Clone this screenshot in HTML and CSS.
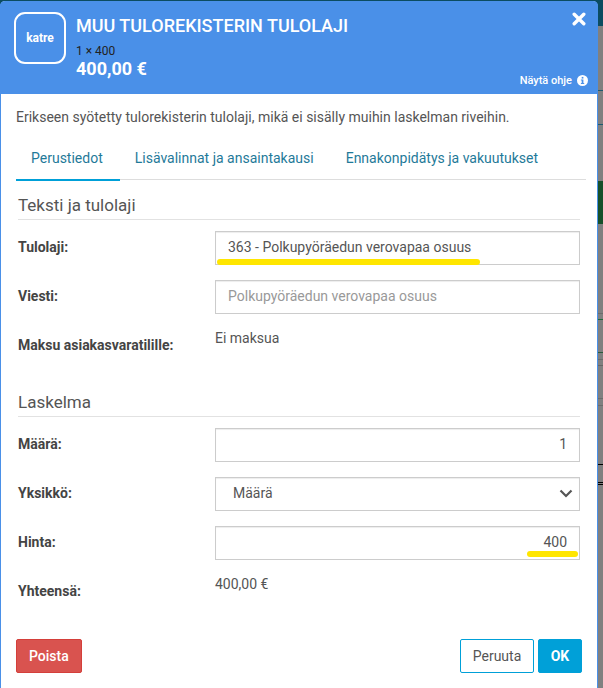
FILE: index.html
```html
<!DOCTYPE html>
<html lang="en">
<head>
    <meta charset="UTF-8">
    <meta name="viewport" content="width=device-width, initial-scale=1.0">
    <title>Muu tulorekisterin tulolaji</title>
    <link rel="stylesheet" href="styles.css">
</head>
<body>
    <div class="modal">
        <header class="modal-header">
            <div class="avatar">katre</div>
            <div class="header-text">
                <h1>MUU TULOREKISTERIN TULOLAJI</h1>
                <div class="header-count">1 × 400</div>
                <div class="header-sum">400,00 €</div>
            </div>
            <div class="header-side">
                <svg class="close-icon" width="14" height="14" viewBox="0 0 14 14">
                    <path d="M2.2 2.2l9.6 9.6M11.8 2.2l-9.6 9.6" stroke="#fff" stroke-width="3.4" stroke-linecap="round"/>
                </svg>
                <a href="#" class="help-link">Näytä ohje
                    <svg width="11" height="11" viewBox="0 0 11 11">
                        <circle cx="5.5" cy="5.5" r="5.5" fill="#fff"/>
                        <rect x="4.7" y="1.9" width="1.7" height="1.7" fill="#4a90e8"/>
                        <path d="M3.9 4.5h2.5v3.4h.8v1H3.9v-1h.8V5.500h-.8z" fill="#4a90e8"/>
                    </svg>
                </a>
            </div>
        </header>

        <div class="modal-body">
            <p class="intro">Erikseen syötetty tulorekisterin tulolaji, mikä ei sisälly muihin laskelman riveihin.</p>

            <nav class="tabs">
                <a href="#" class="tab active">Perustiedot</a>
                <a href="#" class="tab">Lisävalinnat ja ansaintakausi</a>
                <a href="#" class="tab">Ennakonpidätys ja vakuutukset</a>
            </nav>

            <h2 class="section-title">Teksti ja tulolaji</h2>
            <div class="form-row">
                <label>Tulolaji:</label>
                <div class="field">
                    363 - Polkupyöräedun verovapaa osuus
                    <span class="marker marker-long"></span>
                </div>
            </div>
            <div class="form-row">
                <label>Viesti:</label>
                <div class="field placeholder">Polkupyöräedun verovapaa osuus</div>
            </div>
            <div class="form-row static">
                <label>Maksu asiakasvaratilille:</label>
                <div class="value">Ei maksua</div>
            </div>

            <h2 class="section-title second">Laskelma</h2>
            <div class="form-row">
                <label>Määrä:</label>
                <div class="field number">1</div>
            </div>
            <div class="form-row">
                <label>Yksikkö:</label>
                <div class="field select">
                    Määrä
                    <svg width="14" height="9" viewBox="0 0 14 9">
                        <path d="M1.500 1.500L7 7l5.500-5.500" fill="none" stroke="#555" stroke-width="2.200"/>
                    </svg>
                </div>
            </div>
            <div class="form-row">
                <label>Hinta:</label>
                <div class="field number">
                    400
                    <span class="marker marker-short"></span>
                </div>
            </div>
            <div class="form-row static">
                <label>Yhteensä:</label>
                <div class="value">400,00 €</div>
            </div>

            <footer class="actions">
                <button class="btn btn-danger">Poista</button>
                <div class="actions-right">
                    <button class="btn btn-outline">Peruuta</button>
                    <button class="btn btn-primary">OK</button>
                </div>
            </footer>
        </div>
    </div>

    <!-- page behind the dialog, only a thin slice shows -->
    <svg class="backdrop" width="5" height="688" viewBox="0 0 5 688">
        <rect y="91" width="5" height="1" fill="#1d5a70"/>
        <rect y="125" width="5" height="1" fill="#1d5a70"/>
        <rect y="182" width="5" height="43" fill="#16502a"/>
        <rect y="314" width="5" height="1" fill="#6c6c6c"/>
        <rect y="320" width="5" height="1" fill="#1f6a3a"/>
        <rect y="353" width="5" height="1" fill="#2c5a3c"/>
        <rect y="360" width="5" height="1" fill="#6c6c6c"/>
        <rect y="366" width="5" height="1" fill="#666"/>
        <rect y="399" width="5" height="1" fill="#6c6c6c"/>
        <rect y="406" width="5" height="1" fill="#6c6c6c"/>
        <rect y="465" width="5" height="1" fill="#000"/>
        <rect y="483" width="5" height="1" fill="#000"/>
        <rect y="485" width="5" height="1" fill="#000"/>
    </svg>
</body>
</html>
```

FILE: styles.css
```css
/* General Styles */
body {
    margin: 0;
    height: 688px;
    overflow: hidden;
    display: flex;
    align-items: flex-start;
    font-family: Roboto, "Liberation Sans", sans-serif;
    font-size: 14px;
    color: #555;
    background: linear-gradient(#0b4c61 0 26px, #808080 26px);
}

.modal {
    width: 598px;
    height: 687px;
    margin-top: 1px;
    box-sizing: border-box;
    flex-shrink: 0;
    background: #fff;
    border: solid #4a90e8;
    border-width: 0 1px;
    border-radius: 5px 5px 0 0;
}

.backdrop {
    display: block;
    margin-top: -1px;
}

/* Header */
.modal-header {
    display: flex;
    height: 93px;
    margin: 0 -1px 0 -1px;
    padding: 11px 10px 0 14px;
    box-sizing: border-box;
    background: #4a90e8;
    border-radius: 5px 5px 0 0;
    color: #fff;
}

.avatar {
    display: flex;
    align-items: center;
    justify-content: center;
    width: 52px;
    height: 52px;
    box-sizing: border-box;
    border: 2px solid #fff;
    border-radius: 11px;
    font-size: 12px;
    font-weight: 700;
}

.header-text {
    flex: 1;
    margin-left: 10px;
}

.header-text h1 {
    margin: 3px 0 0;
    font-size: 18px;
    line-height: 22px;
    font-weight: 500;
}

.header-count {
    margin-top: 7px;
    font-size: 12px;
    line-height: 14px;
    color: #222;
}

.header-sum {
    font-size: 18px;
    line-height: 22px;
    font-weight: 700;
}

.header-side {
    display: flex;
    flex-direction: column;
    align-items: flex-end;
    justify-content: space-between;
    height: 75px;
}

.close-icon {
    margin: 0 2px 0 0;
}

.help-link {
    display: flex;
    align-items: center;
    gap: 5px;
    color: #fff;
    font-size: 11px;
    font-weight: 500;
    text-decoration: none;
}

/* Body */
.modal-body {
    padding: 0 16px 0 15px;
}

.intro {
    margin: 0;
    padding-top: 14px;
    line-height: 18px;
}

.tabs {
    display: flex;
    margin: 12px 0 0;
    border-bottom: 1px solid #ddd;
    height: 41px;
    width: 570px;
}

.tab {
    padding: 11px 17px 0 15px;
    color: #1f7a99;
    text-decoration: none;
    line-height: 18px;
}

.tab.active {
    height: 30px;
    border-bottom: 2px solid #00a0d8;
}

.section-title {
    margin: 15px 0 11px 2px;
    padding-bottom: 3px;
    width: 562px;
    border-bottom: 1px solid #e2e2e2;
    font-size: 17px;
    line-height: 21px;
    font-weight: 400;
}

.section-title.second {
    margin-top: 29px;
}

/* Form rows */
.form-row {
    display: grid;
    grid-template-columns: 197px 365px;
    align-items: center;
    height: 34px;
    margin: 0 0 15px 2px;
}

.form-row label {
    padding-bottom: 2px;
    font-weight: 700;
    color: #444;
}

.field {
    position: relative;
    height: 34px;
    padding: 0 12px;
    box-sizing: border-box;
    border: 1px solid #ccc;
    box-shadow: inset 0 1px 1px rgba(0, 0, 0, 0.075);
    line-height: 30px;
}

.field.placeholder {
    color: #999;
}

.field.number {
    text-align: right;
}

.field.select {
    display: flex;
    align-items: center;
    justify-content: space-between;
    padding: 0 6px 2px 17px;
}

.form-row.static {
    align-items: start;
}

.form-row.static label {
    padding-top: 8px;
}

.form-row.static .value {
    line-height: 18px;
}

/* highlighter strokes drawn over the screenshot */
.marker {
    position: absolute;
    height: 6px;
    border-radius: 3px;
    background: #ffe600;
}

.marker-long {
    left: 1px;
    width: 263px;
    bottom: -1px;
}

.marker-short {
    right: 1px;
    width: 51px;
    bottom: 2px;
}

/* Buttons */
.actions {
    display: flex;
    justify-content: space-between;
    width: 566px;
    margin-top: 30px;
}

.actions-right {
    display: flex;
    gap: 4px;
}

.btn {
    height: 34px;
    padding: 0 12px;
    border: 1px solid transparent;
    border-radius: 2px;
    font-family: inherit;
    font-size: 14px;
}

.btn-danger {
    background: #d9534f;
    border-color: #d43f3a;
    color: #fff;
    font-weight: 500;
}

.btn-outline {
    width: 74px;
    padding: 0;
    background: #fff;
    border-color: #00a0d8;
    color: #555;
}

.btn-primary {
    width: 44px;
    padding: 0;
    background: #00a0d8;
    border-color: #00a0d8;
    color: #fff;
    font-weight: 700;
}
```
